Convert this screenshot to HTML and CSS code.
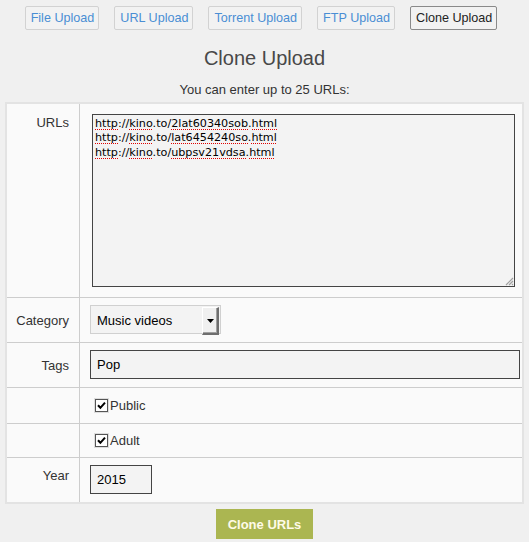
FILE: index.html
```html
<!DOCTYPE html>
<html>
<head>
<meta charset="utf-8">
<link rel="stylesheet" href="styles.css">
</head>
<body>
<nav class="tabs">
  <a class="tab">File Upload</a>
  <a class="tab">URL Upload</a>
  <a class="tab">Torrent Upload</a>
  <a class="tab">FTP Upload</a>
  <a class="tab tab-active">Clone Upload</a>
</nav>
<h1 class="title">Clone Upload</h1>
<p class="subtitle">You can enter up to 25 URLs:</p>
<table class="form">
  <tr class="row-urls">
    <td class="label label-top">URLs</td>
    <td class="field field-urls">
      <div class="textarea">
        <div class="ta-line"><span class="sp">http</span>://<span class="sp">kino</span>.to/<span class="sp">2lat60340sob</span>.<span class="sp">html</span></div>
        <div class="ta-line"><span class="sp">http</span>://<span class="sp">kino</span>.to/<span class="sp">lat6454240so</span>.<span class="sp">html</span></div>
        <div class="ta-line"><span class="sp">http</span>://<span class="sp">kino</span>.to/<span class="sp">ubpsv21vdsa</span>.<span class="sp">html</span></div>
        <svg class="grip" width="10" height="10" viewBox="0 0 10 10"><path d="M9 2 L2 9 M9 5 L5 9 M9 8 L8 9" stroke="#a0a0a0" stroke-width="1.2"/></svg>
      </div>
    </td>
  </tr>
  <tr class="row-cat">
    <td class="label">Category</td>
    <td class="field">
      <div class="select">
        <span class="select-text">Music videos</span>
        <span class="select-btn"><svg width="7" height="4" viewBox="0 0 7 4"><path d="M0 0 H7 L3.5 4 Z" fill="#000"/></svg></span>
      </div>
    </td>
  </tr>
  <tr class="row-tags">
    <td class="label">Tags</td>
    <td class="field field-tags"><div class="input input-wide">Pop</div></td>
  </tr>
  <tr class="row-check1">
    <td class="label"></td>
    <td class="field"><label class="check"><span class="box"><svg width="9" height="9" viewBox="0 0 9 9"><path d="M1 4.2 L3.4 6.8 L8 1.6" stroke="#000" stroke-width="2" fill="none"/></svg></span>Public</label></td>
  </tr>
  <tr class="row-check2">
    <td class="label"></td>
    <td class="field"><label class="check"><span class="box"><svg width="9" height="9" viewBox="0 0 9 9"><path d="M1 4.2 L3.4 6.8 L8 1.6" stroke="#000" stroke-width="2" fill="none"/></svg></span>Adult</label></td>
  </tr>
  <tr class="row-year">
    <td class="label label-year">Year</td>
    <td class="field"><div class="input input-year">2015</div></td>
  </tr>
</table>
<div class="actions"><button class="submit">Clone URLs</button></div>
</body>
</html>
```
FILE: styles.css
```css
html, body {
  margin: 0;
  padding: 0;
  background: #f0f0f0;
  font-family: "Liberation Sans", Arial, sans-serif;
  font-size: 13px;
  color: #333;
}
.tabs {
  display: flex;
  justify-content: center;
  gap: 15px;
  padding-top: 6px;
  padding-right: 7px;
}
.tab {
  display: block;
  height: 22px;
  line-height: 22px;
  padding: 0 4px 0 5px;
  border: 1px solid #d2d2d2;
  border-radius: 2px;
  color: #4a8ed4;
  background: #f2f2f2;
  font-size: 12.6px;
}
.tab-active {
  border-color: #8a8a8a;
  color: #222;
}
.title {
  margin: 16px 0 0;
  font-size: 20px;
  font-weight: normal;
  line-height: 24px;
  text-align: center;
  color: #484848;
}
.subtitle {
  margin: 12px 0 0;
  line-height: 16px;
  text-align: center;
  color: #333;
}
.form {
  margin: 4px 5px 0 5px;
  width: 519px;
  border-collapse: collapse;
  border: 2px solid #e3e3e3;
  background: #fafafa;
}
.form td {
  border-top: 1px solid #cdcdcd;
  padding: 0;
}
.form tr:first-child td { border-top: none; }
.label {
  width: 62px;
  padding-right: 10px !important;
  border-right: 1px solid #cdcdcd;
  text-align: right;
  vertical-align: middle;
  color: #333;
}
.label-top {
  vertical-align: top;
  padding-top: 11px !important;
}
.label-year {
  vertical-align: top;
  padding-top: 10px !important;
}
.field {
  padding-left: 10px !important;
  vertical-align: top;
}
.row-urls .field { padding: 10px 0 10px 12px !important; }
.row-cat .field { padding: 7px 0 8px 10px !important; }
.row-tags .field { padding: 7px 0 8px 10px !important; }
.row-check1 .field { height: 35px; vertical-align: middle; }
.row-check2 .field { height: 33px; vertical-align: middle; }
.row-year .field { padding: 7px 0 8px 10px !important; }

.textarea {
  position: relative;
  box-sizing: border-box;
  width: 423px;
  height: 173px;
  border: 1px solid #444;
  background: #f3f3f3;
  padding: 2px 2px;
  font-family: "DejaVu Sans", Tahoma, sans-serif;
  font-size: 11.2px;
  line-height: 14.4px;
  color: #000;
}
.sp {
  background-image: linear-gradient(to right, #e00000 50%, transparent 50%);
  background-size: 2px 1px;
  background-repeat: repeat-x;
  background-position: 0 100%;
}
.grip {
  position: absolute;
  right: 0;
  bottom: 0;
}
.select {
  box-sizing: border-box;
  display: flex;
  width: 131px;
  height: 29px;
  border: 1px solid #d0d0d0;
  background: #f3f3f3;
  padding: 1px 1px 0 0;
}
.select-text {
  flex: 1;
  padding-left: 6px;
  line-height: 27px;
  color: #000;
}
.select-btn {
  box-sizing: border-box;
  width: 17px;
  height: 28px;
  display: flex;
  align-items: center;
  justify-content: center;
  background: #f0f0f0;
  border-top: 1px solid #fff;
  border-left: 1px solid #fff;
  border-right: 2px solid #6e6e6e;
  border-bottom: 2px solid #6e6e6e;
  box-shadow: inset -1px -1px 0 #a0a0a0;
}
.input {
  box-sizing: border-box;
  height: 29px;
  line-height: 27px;
  padding-left: 6px;
  border: 1px solid #444;
  background: #f3f3f3;
  color: #000;
}
.input-wide { width: 430px; }
.input-year { width: 62px; }
.check {
  display: flex;
  align-items: center;
  padding-left: 5px;
  color: #333;
}
.box {
  box-sizing: border-box;
  width: 13px;
  height: 13px;
  margin-right: 2px;
  border: 1px solid #555;
  background: #fff;
  display: flex;
  align-items: center;
  justify-content: center;
  box-shadow: 0 0 0 1px #ddd;
}
.actions {
  display: flex;
  justify-content: center;
  padding-top: 5px;
}
.submit {
  width: 97px;
  height: 30px;
  border: none;
  background: #abb651;
  color: #fffbe8;
  font-family: "Liberation Sans", Arial, sans-serif;
  font-size: 13px;
  font-weight: bold;
  padding: 0;
}
```
